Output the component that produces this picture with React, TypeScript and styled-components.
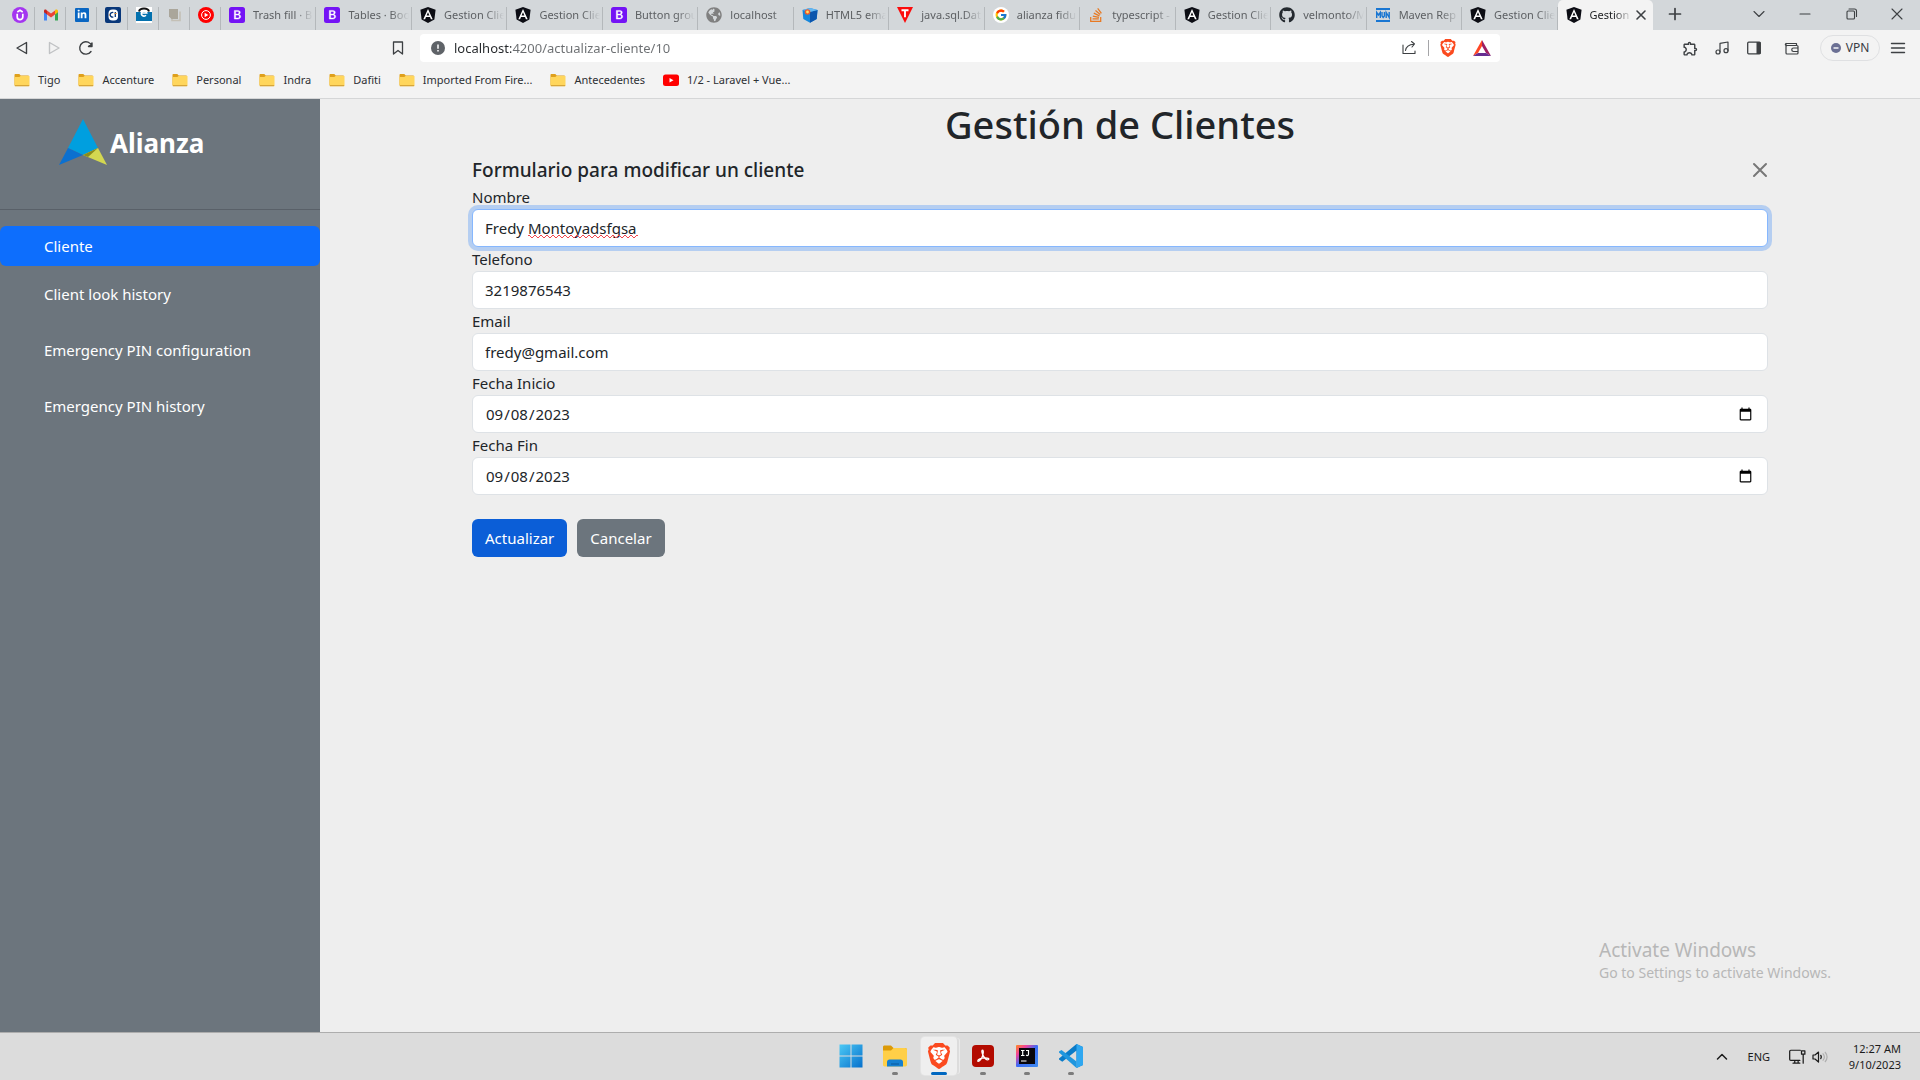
import React from 'react';
import styled, { createGlobalStyle, css } from 'styled-components';
import { FaAngular, FaGithub, FaGlobeAmericas, FaLinkedinIn, FaStackOverflow } from 'react-icons/fa';
import { FcGoogle } from 'react-icons/fc';
import { SiBrave } from 'react-icons/si';
import { MdOutlineExtension } from 'react-icons/md';
import { Music } from 'lucide-react';

const GlobalStyle = createGlobalStyle`
  *, *::before, *::after { box-sizing: border-box; }
  body {
    margin: 0;
    background: #eeeeee;
    color: #212529;
    font-family: "Noto Sans", "Open Sans", "Liberation Sans", sans-serif;
    font-size: 15px;
    line-height: 24px;
  }
  button, input { font: inherit; color: inherit; margin: 0; }
  button { border: 0; padding: 0; background: none; cursor: pointer; }
  a { color: inherit; text-decoration: none; }
  ul { list-style: none; margin: 0; padding: 0; }
  svg { display: block; flex: none; }
`;

const Desktop = styled.div`
  display: flex;
  flex-direction: column;
  min-height: 100vh;
`;

/* ---------- Tab strip ---------- */

const TabStrip = styled.div`
  display: flex;
  height: 30px;
  background: #d3d7da;
`;

const PinnedTabs = styled.div`
  display: flex;
  padding-left: 4px;
`;

const separator = css`
  background-image: linear-gradient(#b4b8bb, #b4b8bb);
  background-size: 1px 23px;
  background-position: right bottom;
  background-repeat: no-repeat;
`;

const PinnedTab = styled.button`
  ${separator}
  display: flex;
  align-items: center;
  justify-content: center;
  width: 31px;
`;

const OpenTabs = styled.div`
  display: flex;
  flex: 1;
  min-width: 0;
`;

const Tab = styled.div<{ $active?: boolean }>`
  display: flex;
  flex: 1 1 0;
  min-width: 0;
  align-items: center;
  padding: 0 3px 0 8px;
  font-size: 11px;
  line-height: 16px;
  color: #5d6063;
  ${(p) => (p.$active
    ? css`
        background: #f3f3f3;
        color: #222426;
        border-radius: 5px 5px 0 0;
      `
    : separator)}
`;

const TabTitle = styled.button`
  flex: 1;
  min-width: 0;
  padding-left: 8px;
  overflow: hidden;
  white-space: nowrap;
  text-align: left;
  mask-image: linear-gradient(90deg, #000 calc(100% - 18px), transparent);
`;

const IconButton = styled.button<{ $w?: number }>`
  display: flex;
  align-items: center;
  justify-content: center;
  width: ${(p) => p.$w ?? 32}px;
  height: 28px;
  color: #3d4043;
`;

const WindowControls = styled.div`
  display: flex;
  width: 267px;
`;

const Spacer = styled.div`
  flex: 1;
`;

/* ---------- Toolbar ---------- */

const Toolbar = styled.div`
  display: grid;
  grid-template-columns: minmax(120px, 1fr) minmax(0, 1080px) minmax(240px, 1fr);
  align-items: center;
  height: 36px;
  background: #f3f3f3;
`;

const ToolGroup = styled.div`
  display: flex;
  align-items: center;
  padding: 0 6px;
`;

const AddressBar = styled.div`
  display: flex;
  align-items: center;
  height: 28px;
  padding-left: 10px;
  border-radius: 4px;
  background: #fff;
`;

const UrlInput = styled.input`
  flex: 1;
  min-width: 0;
  padding: 0 8px;
  border: 0;
  outline: 0;
  font-size: 13px;
  line-height: 20px;
  background: linear-gradient(90deg, #25282b 65px, #6b6e71 65px);
  -webkit-background-clip: text;
  -webkit-text-fill-color: transparent;
`;

const Divider = styled.span`
  width: 1px;
  height: 16px;
  margin: 0 3px;
  background: #a5a5a8;
`;

const VpnButton = styled.button`
  display: flex;
  align-items: center;
  justify-content: center;
  gap: 5px;
  width: 60px;
  height: 26px;
  margin: 0 2px 0 6px;
  border: 1px solid #dfe0e2;
  border-radius: 13px;
  font-size: 12px;
  line-height: 16px;
  color: #3a3c44;
`;

/* ---------- Bookmarks ---------- */

const BookmarkBar = styled.nav`
  display: flex;
  align-items: center;
  gap: 18px;
  height: 33px;
  padding: 0 14px 4px;
  background: #f3f3f3;
  border-bottom: 1px solid #d5d6d7;
`;

const Bookmark = styled.a`
  display: flex;
  align-items: center;
  gap: 8px;
  font-size: 11px;
  line-height: 16px;
  color: #2e3033;
  white-space: nowrap;
`;

/* ---------- Application ---------- */

const AppShell = styled.div`
  position: relative;
  display: flex;
  flex: 1;
`;

const Sidebar = styled.aside`
  flex: none;
  width: 320px;
  background: #6c757d;
  color: #fff;
`;

const Brand = styled.a`
  display: flex;
  height: 111px;
  padding: 20px 0 0 58px;
  border-bottom: 1px solid #596068;
`;

const Menu = styled.ul`
  display: flex;
  flex-direction: column;
  gap: 16px;
  padding-top: 16px;
`;

const MenuGroup = styled.li`
  display: flex;
  flex-direction: column;
  gap: 8px;
`;

const MenuLink = styled.a<{ $active?: boolean }>`
  display: block;
  padding: 8px 44px;
  border-radius: 6px;
  background: ${(p) => (p.$active ? '#0d6efd' : 'transparent')};
`;

const Main = styled.main`
  flex: 1;
  min-width: 0;
`;

const Container = styled.div`
  max-width: 1320px;
  margin: 0 auto;
  padding: 0 12px;
`;

const PageTitle = styled.h1`
  margin: 0 0 6px;
  font-size: 38px;
  font-weight: 500;
  line-height: 50px;
  text-align: center;
`;

const FormHeader = styled.div`
  display: flex;
  align-items: center;
  justify-content: space-between;
  height: 30px;
`;

const FormTitle = styled.h5`
  margin: 0;
  font-size: 19px;
  font-weight: 500;
  line-height: 26px;
`;

const CloseButton = styled.button`
  color: #777;
`;

const Field = styled.div`
  display: flex;
  flex-direction: column;
`;

const InputWrap = styled.div`
  position: relative;
  display: flex;
`;

const Input = styled.input<{ $focused?: boolean }>`
  flex: 1;
  min-width: 0;
  height: 38px;
  padding: 6px 12px;
  border: 1px solid #dee2e6;
  border-radius: 6px;
  outline: 0;
  background: #fff;
  ${(p) => p.$focused && css`
    border-color: #86b7fe;
    box-shadow: 0 0 0 4px rgba(13, 110, 253, 0.25);
  `}
`;

const SpellingMark = styled.span`
  position: absolute;
  left: 56px;
  bottom: 9px;
  width: 110px;
  height: 3px;
  background:
    repeating-linear-gradient(90deg, #f0474d 0 2px, transparent 2px 6px) 0 0 / 100% 1px no-repeat,
    repeating-linear-gradient(90deg, transparent 0 2px, #f0474d 2px 3px, transparent 3px 5px, #f0474d 5px 6px) 0 1px / 100% 1px no-repeat,
    repeating-linear-gradient(90deg, transparent 0 3px, #f0474d 3px 5px, transparent 5px 6px) 0 2px / 100% 1px no-repeat;
`;

const Actions = styled.div`
  display: flex;
  gap: 10px;
  padding-top: 24px;
`;

const Button = styled.button<{ $primary?: boolean }>`
  height: 38px;
  padding: 0 13px;
  border-radius: 6px;
  color: #fff;
  background: ${(p) => (p.$primary ? '#0b5ed7' : '#6c757d')};
`;

const Watermark = styled.div`
  position: absolute;
  right: 84px;
  bottom: 49px;
  width: 237px;
  color: #b7b7b7;
  font-size: 14px;
  line-height: 20px;
`;

const WatermarkTitle = styled.div`
  font-size: 19px;
  line-height: 26px;
`;

/* ---------- Taskbar ---------- */

const Taskbar = styled.footer`
  display: grid;
  grid-template-columns: 1fr auto 1fr;
  height: 48px;
  background: #dcdcdc;
  border-top: 1px solid #adadad;
`;

const TaskApps = styled.div`
  grid-column: 2;
  display: flex;
  padding-left: 2px;
`;

const TaskApp = styled.button<{ $state?: 'running' | 'active' }>`
  position: relative;
  display: flex;
  align-items: center;
  justify-content: center;
  width: 36px;
  height: 38px;
  margin: 4px;
  border-radius: 4px;
  ${(p) => p.$state === 'active' && css`
    background: #efefef;
    box-shadow: 3px 0 0 -1px #dcdcdc, 4px 0 0 -1px #ebebeb, 0 0 0 1px #e4e4e4;
  `}
  ${(p) => p.$state && css`
    &::after {
      content: '';
      position: absolute;
      bottom: 0;
      width: ${p.$state === 'active' ? 16 : 6}px;
      height: 3px;
      border-radius: 2px;
      background: ${p.$state === 'active' ? '#0067c0' : '#7c7c7c'};
    }
  `}
`;

const Tray = styled.div`
  display: flex;
  align-items: center;
  justify-content: flex-end;
  padding-right: 19px;
  font-size: 11px;
  line-height: 16px;
  color: #1b1b1b;
`;

const Language = styled.button`
  margin: 0 18px;
`;

const TrayStatus = styled.button`
  display: flex;
  align-items: center;
  gap: 6px;
  margin-right: 13px;
`;

const Clock = styled.button`
  width: 60px;
  text-align: right;
`;

/* ---------- Icons ---------- */

const BootstrapIcon = () => (
  <svg width="16" height="16" viewBox="0 0 16 16">
    <rect width="16" height="16" rx="2.5" fill="#7413f5" />
    <path d="M5.3 3.4h3.5c1.5 0 2.5.8 2.5 2.1 0 .9-.7 1.7-1.5 1.9v.1c1.1.1 1.9.9 1.9 2.1 0 1.6-1.200 2.500-3 2.500H5.300z M6.700 4.500v2.600h1.500c1.100 0 1.700-.5 1.700-1.300s-.5-1.300-1.500-1.300zM6.700 8.100v2.900h1.800c1.200 0 1.800-.5 1.800-1.500s-.7-1.400-1.900-1.400z" fill="#fff" fillRule="evenodd" stroke="#fff" strokeWidth=".4" />
  </svg>
);

const AngularIcon = () => (
  <svg width="16" height="16" viewBox="0 0 16 16">
    <path d="M8 0l7.600 2.700-1.200 9.900L8 16l-6.400-3.400L.4 2.700z" fill="#0c0d14" />
    <path d="M8 1.900L3.300 12.300h1.800l.9-2.300h4l.9 2.300h1.800zM8 5.200l1.400 3.300H6.600z" fill="#fff" />
  </svg>
);

const UdemyIcon = () => (
  <svg width="16" height="16" viewBox="0 0 16 16">
    <circle cx="8" cy="8" r="8" fill="#a435f0" />
    <path d="M5.200 6.800v3.100c0 3.500 5.600 3.500 5.600 0V6.800M5.300 5L8 3.300 10.700 5" fill="none" stroke="#fff" strokeWidth="1.700" />
  </svg>
);

const GmailIcon = () => (
  <svg width="16" height="16" viewBox="0 0 16 16">
    <path d="M1 4v9.500h3V6.800L1 4z" fill="#4285f4" />
    <path d="M12 6.800v6.700h3V4z" fill="#34a853" />
    <path d="M12 3.600v4L15 5.300V4c0-1.600-1.700-2-2.700-1.200z" fill="#fbbc04" />
    <path d="M4 7.600V3.500l4 3 4-3v4.100l-4 3z" fill="#ea4335" />
    <path d="M1 4v1.300l3 2.300V3.500l-.5-.5C2.500 2.200 1 2.700 1 4z" fill="#c5221f" />
  </svg>
);

const LinkedinIcon = () => (
  <svg width="16" height="16" viewBox="0 0 16 16">
    <rect x="1" y="1" width="14" height="14" rx="1" fill="#0a66c2" />
    <g transform="translate(3 2.500)"><FaLinkedinIn size={10} color="#fff" /></g>
  </svg>
);

const CredentialIcon = () => (
  <svg width="16" height="16" viewBox="0 0 16 16">
    <rect width="16" height="16" rx="2" fill="#08377a" />
    <rect x="3.500" y="2.500" width="9.500" height="11" rx="4" fill="#fff" />
    <path d="M8.300 5.600a2.300 2.300 0 1 0 0 4.300" fill="none" stroke="#08377a" strokeWidth="1.300" />
    <path d="M10.300 5v5" stroke="#08377a" strokeWidth="1.300" />
    <path d="M4 8h1M9.600 6.500h2" stroke="#e58a28" strokeWidth="1" />
  </svg>
);

const BadgeIcon = () => (
  <svg width="16" height="16" viewBox="0 0 16 16">
    <rect width="16" height="16" fill="#fff" />
    <path d="M0 5h16v9H0z" fill="#0471ae" />
    <path d="M3 4.500C4 .5 12 .5 13 4.500" fill="none" stroke="#141414" strokeWidth="2" />
    <path d="M5.500 6h5.200A2.700 2.700 0 1 0 10 8.300" fill="none" stroke="#fff" strokeWidth="1.600" />
  </svg>
);

const PagesIcon = () => (
  <svg width="16" height="16" viewBox="0 0 16 16">
    <path d="M5 5v8.500h8V4.500" fill="none" stroke="#c4c0b6" strokeWidth="1.600" />
    <path d="M2 2h9v10H4.500L2 9.500z" fill="#aaa69b" />
  </svg>
);

const YoutubeMusicIcon = () => (
  <svg width="16" height="16" viewBox="0 0 16 16">
    <circle cx="8" cy="8" r="8" fill="#f00" />
    <circle cx="8" cy="8" r="4.400" fill="none" stroke="#fff" strokeWidth="1" />
    <path d="M6.600 5.700v4.600L10.300 8z" fill="#fff" />
  </svg>
);

const CubeIcon = () => (
  <svg width="16" height="16" viewBox="0 0 16 16">
    <path d="M.5 3L8 1l7.500 2-.8 9L8 15.800 1.300 12z" fill="#1687dc" />
    <path d="M8 5l7.500-2-.8 9L8 15.800z" fill="#0b55ad" />
    <path d="M.5 3L8 1l7.500 2L8 5z" fill="#64b7f2" />
    <circle cx="5.500" cy="5" r="2.800" fill="#f15a29" />
    <circle cx="5.500" cy="5" r="1.400" fill="#ffe066" />
  </svg>
);

const TriangleIcon = () => (
  <svg width="16" height="16" viewBox="0 0 16 16">
    <path d="M0 0h16L8 16z" fill="#fb0d0d" />
    <path d="M4.500 3.200h7M8 3.200v7" stroke="#fff" strokeWidth="1.900" />
  </svg>
);

const GoogleIcon = () => (
  <svg width="16" height="16" viewBox="0 0 16 16">
    <circle cx="8" cy="8" r="8" fill="#fff" />
    <g transform="translate(1.500 1.500)"><FcGoogle size={13} /></g>
  </svg>
);

const MavenIcon = () => (
  <svg width="16" height="16" viewBox="0 0 16 16" stroke="#1976d2" fill="none">
    <path d="M1 2h14M1 14h14" strokeWidth="2" />
    <path d="M1.700 11V5.500L3.500 8l1.800-2.500V11M7 5v4l1.200 1.500L9.400 9V5M11.200 11V5.500l3 5V5" strokeWidth="1.400" />
  </svg>
);

const FolderIcon = () => (
  <svg width="16" height="16" viewBox="0 0 16 16">
    <path d="M.5 3c0-.6.400-1 1-1h3.800l1.400 1.500H14c.6 0 1 .4 1 1V13H.5z" fill="#dfa01c" />
    <path d="M.5 5h4.800l1.200-1H15.500v9.300c0 .5-.4.900-.9.900H1.400c-.5 0-.9-.4-.9-.9z" fill="#ffd65c" />
    <path d="M.8 13.700h14.400" stroke="#c9952c" strokeWidth=".9" />
  </svg>
);

const YoutubeIcon = () => (
  <svg width="16" height="16" viewBox="0 0 16 16">
    <rect y="2.500" width="16" height="11.500" rx="2.500" fill="#f00" />
    <path d="M6.500 6v4.500l4-2.250z" fill="#fff" />
  </svg>
);

const BraveIcon = ({ size }: { size: number }) => (
  <svg width={size} height={size} viewBox="0 0 24 24">
    <path d="M6 3h12l2 5-2 8-6 6-6-6-2-8z" fill="#fff" />
    <SiBrave size={24} color="#fb4a1f" />
  </svg>
);

const BatIcon = () => (
  <svg width="18" height="16" viewBox="0 0 18 16">
    <path d="M9 0L0 16l5-3 4-7z" fill="#ff4724" />
    <path d="M9 0l9 16-5-3-4-7z" fill="#9e1f63" />
    <path d="M0 16h18l-5-3H5z" fill="#662d91" />
  </svg>
);

const Line = ({ d, size = 16, w = 1.2, fill = 'none' }: { d: string; size?: number; w?: number; fill?: string }) => (
  <svg width={size} height={size} viewBox="0 0 16 16" fill={fill} stroke="currentColor" strokeWidth={w} strokeLinecap="round" strokeLinejoin="round">
    <path d={d} />
  </svg>
);

const AlianzaLogo = () => (
  <svg width="146" height="48" viewBox="0 0 146 48" role="img" aria-label="Alianza">
    <path d="M25 0l15 29-15 7-15-7z" fill="#009fdf" />
    <path d="M10 29l15 7L1 46z" fill="#0b70d0" />
    <path d="M40 29l9 17-24-10z" fill="#d3d751" />
    <path d="M40 29l-15 7 5 2z" fill="#8b8b1c" />
    <text x="52" y="34" fill="#fff" fontFamily='"Noto Sans", sans-serif' fontWeight="700" fontSize="26">Alianza</text>
  </svg>
);

const WindowsIcon = () => (
  <svg width="24" height="24" viewBox="0 0 24 24">
    <defs>
      <linearGradient id="win" x1="0" y1="0" x2="1" y2="1" gradientUnits="objectBoundingBox">
        <stop offset="0" stopColor="#4cc9f5" />
        <stop offset="1" stopColor="#0670cc" />
      </linearGradient>
    </defs>
    <path d="M.5.5h11v11H.5zM12.500.5h11v11h-11zM.5 12.500h11v11H.5zM12.500 12.500h11v11h-11z" fill="url(#win)" />
  </svg>
);

const ExplorerIcon = () => (
  <svg width="24" height="24" viewBox="0 0 24 24">
    <path d="M0 3c0-1 .7-1.500 1.500-1.500H8L10.500 4H22c1 0 2 .7 2 1.800V9H0z" fill="#dc9a08" />
    <path d="M0 6.500h8L10.500 4H22c1 0 2 .7 2 1.800v15c0 1-.7 1.700-1.700 1.700H1.700C.7 22.500 0 21.800 0 20.800z" fill="#ffcf48" />
    <path d="M4 22.500V18c0-1.500 1-2.500 2.500-2.500h11c1.500 0 2.500 1 2.500 2.500v4.500z" fill="#1580d1" />
    <path d="M8 19.500h8v1H8z" fill="#0a589b" />
  </svg>
);

const AcrobatIcon = () => (
  <svg width="22" height="22" viewBox="0 0 22 22">
    <rect width="22" height="22" rx="4" fill="#b30b00" />
    <path d="M10.500 5.200c-1.300 0-.4 3.600.8 5.600 1.200 2.100 3.600 4.300 4.900 3.900 1.700-.7-.3-2.200-4-1.800-3 .2-6.300 1.600-6.400 2.800-.1 1.600 2.400.3 4-3 1.600-3.100 2-7.500.7-7.500z" fill="none" stroke="#fff" strokeWidth="1.300" />
  </svg>
);

const IntellijIcon = () => (
  <svg width="22" height="22" viewBox="0 0 22 22">
    <defs>
      <linearGradient id="ij" x1="0" y1="0" x2="1" y2="1">
        <stop offset="0" stopColor="#ff8a1f" />
        <stop offset=".25" stopColor="#f0419c" />
        <stop offset=".5" stopColor="#3b6cf6" />
        <stop offset="1" stopColor="#3f8cf0" />
      </linearGradient>
    </defs>
    <rect width="22" height="22" rx="1" fill="url(#ij)" />
    <rect x="3" y="3" width="16" height="16" fill="#08060c" />
    <path d="M5 5.500h3.500M5 10.500h3.500M6.700 5.500v5M10 5.500h2.500v3.700c0 1.500-1.500 1.700-2.300.8M5 16h5.500" fill="none" stroke="#fff" strokeWidth="1.200" />
  </svg>
);

const VscodeIcon = () => (
  <svg width="24" height="24" viewBox="0 0 24 24">
    <path d="M17.500 0L24 3v18l-6.500 3V6.500L3.300 17.700 0 15.500v-1z" fill="#0a7bc8" />
    <path d="M17.500 24L0 8.500v-1L2.500 6l15 11.500z" fill="#1f96de" />
    <path d="M17.500 0L24 3v18l-6.500 3z" fill="#2fa7f0" />
  </svg>
);

/* ---------- Data ---------- */

const pinned = [
  { name: 'Udemy', icon: <UdemyIcon /> },
  { name: 'Gmail', icon: <GmailIcon /> },
  { name: 'LinkedIn', icon: <LinkedinIcon /> },
  { name: 'Credenciales', icon: <CredentialIcon /> },
  { name: 'Portal', icon: <BadgeIcon /> },
  { name: 'Documentos', icon: <PagesIcon /> },
  { name: 'YouTube Music', icon: <YoutubeMusicIcon /> },
];

const tabs = [
  { title: 'Trash fill · B', icon: <BootstrapIcon /> },
  { title: 'Tables · Boo', icon: <BootstrapIcon /> },
  { title: 'Gestion Clie', icon: <AngularIcon /> },
  { title: 'Gestion Clie', icon: <AngularIcon /> },
  { title: 'Button grou', icon: <BootstrapIcon /> },
  { title: 'localhost', icon: <FaGlobeAmericas size={16} color="#808080" /> },
  { title: 'HTML5 ema', icon: <CubeIcon /> },
  { title: 'java.sql.Dat', icon: <TriangleIcon /> },
  { title: 'alianza fidu', icon: <GoogleIcon /> },
  { title: 'typescript -', icon: <FaStackOverflow size={16} color="#e87922" /> },
  { title: 'Gestion Clie', icon: <AngularIcon /> },
  { title: 'velmonto/M', icon: <FaGithub size={16} color="#24292f" /> },
  { title: 'Maven Rep', icon: <MavenIcon /> },
  { title: 'Gestion Clie', icon: <AngularIcon /> },
];

const folders = ['Tigo', 'Accenture', 'Personal', 'Indra', 'Dafiti', 'Imported From Fire...', 'Antecedentes'];

const fields = [
  { id: 'nombre', label: 'Nombre', type: 'text', value: 'Fredy Montoyadsfgsa', focused: true },
  { id: 'telefono', label: 'Telefono', type: 'text', value: '3219876543' },
  { id: 'email', label: 'Email', type: 'text', value: 'fredy@gmail.com' },
  { id: 'fechaInicio', label: 'Fecha Inicio', type: 'date', value: '2023-09-08' },
  { id: 'fechaFin', label: 'Fecha Fin', type: 'date', value: '2023-09-08' },
];

/* ---------- Sections ---------- */

const BrowserChrome = () => (
  <header>
    <TabStrip>
      <PinnedTabs>
        {pinned.map((p) => (
          <PinnedTab key={p.name} aria-label={p.name}>{p.icon}</PinnedTab>
        ))}
      </PinnedTabs>
      <OpenTabs>
        {tabs.map((t, i) => (
          <Tab key={i}>
            {t.icon}
            <TabTitle>{t.title}</TabTitle>
          </Tab>
        ))}
        <Tab $active>
          <AngularIcon />
          <TabTitle>Gestion</TabTitle>
          <IconButton $w={18} aria-label="Cerrar pestaña"><Line d="M4 4l8 8M12 4l-8 8" w={1.6} /></IconButton>
        </Tab>
      </OpenTabs>
      <WindowControls>
        <IconButton $w={44} aria-label="Nueva pestaña"><Line d="M8 2.500v11M2.500 8h11" w={1.700} /></IconButton>
        <Spacer />
        <IconButton $w={46} aria-label="Buscar pestañas"><Line d="M3 5.500l5 5 5-5" w={1.1} /></IconButton>
        <IconButton $w={46} aria-label="Minimizar"><Line d="M3 8h10" w={1.1} /></IconButton>
        <IconButton $w={46} aria-label="Restaurar"><Line d="M5 5h5.500a1 1 0 0 1 1 1v6a1 1 0 0 1-1 1H5a1 1 0 0 1-1-1V6a1 1 0 0 1 1-1zM6 3h5.500a2 2 0 0 1 2 2v5.500" w={1.1} /></IconButton>
        <IconButton $w={46} aria-label="Cerrar"><Line d="M3 3l10 10M13 3L3 13" w={1.1} /></IconButton>
      </WindowControls>
    </TabStrip>
    <Toolbar>
      <ToolGroup>
        <IconButton aria-label="Atrás"><Line d="M12.500 2.500v11L3 8z" w={1.4} /></IconButton>
        <IconButton aria-label="Adelante" disabled><svg width="16" height="16" viewBox="0 0 16 16" fill="none" stroke="#c0c2c4" strokeWidth="1.400" strokeLinejoin="round"><path d="M3.500 2.500v11L13 8z" /></svg></IconButton>
        <IconButton aria-label="Recargar"><Line d="M13 11.500A6.200 6.200 0 1 1 13.800 6M14 3v3.500h-3.500z" w={1.4} /></IconButton>
        <Spacer />
        <IconButton aria-label="Agregar a marcadores"><Line d="M3.500 2h9v12L8 10.500 3.500 14z" w={1.3} /></IconButton>
      </ToolGroup>
      <AddressBar>
        <svg width="16" height="16" viewBox="0 0 16 16"><circle cx="8" cy="8" r="7" fill="#5f6368" /><path d="M8 4.500v4.300M8 10v1.500" stroke="#fff" strokeWidth="1.500" /></svg>
        <UrlInput aria-label="Dirección" defaultValue="localhost:4200/actualizar-cliente/10" />
        <IconButton aria-label="Compartir"><Line d="M2 5v8.500h12V11M4.500 10.500c.5-4 3-6 8.500-6.300M10.500 1.500L13.500 4 11 7" w={1.1} /></IconButton>
        <Divider />
        <IconButton aria-label="Brave Shields"><BraveIcon size={18} /></IconButton>
        <IconButton $w={36} aria-label="Brave Rewards"><BatIcon /></IconButton>
      </AddressBar>
      <ToolGroup>
        <Spacer />
        <IconButton aria-label="Extensiones"><MdOutlineExtension size={17} /></IconButton>
        <IconButton aria-label="Música"><Music size={16} strokeWidth={1.8} /></IconButton>
        <IconButton aria-label="Barra lateral">
          <svg width="16" height="16" viewBox="0 0 16 16"><rect x="1.700" y="2.200" width="12.600" height="11.600" rx="1" fill="none" stroke="currentColor" strokeWidth="1.300" /><path d="M10.500 2h4v12h-4z" fill="currentColor" /></svg>
        </IconButton>
        <IconButton $w={44} aria-label="Billetera"><Line d="M2 3.500h10.500v2M2 3.500v9.500a1 1 0 0 0 1 1h10a1 1 0 0 0 1-1V6.500a1 1 0 0 0-1-1H3a1 1 0 0 1-1-2zM14 8h-4.500a1.700 1.700 0 0 0 0 3.500H14" w={1.2} /></IconButton>
        <VpnButton>
          <svg width="10" height="10" viewBox="0 0 10 10"><circle cx="5" cy="5" r="5" fill="#6b7094" /><path d="M2.500 5h5" stroke="#fff" strokeWidth="1.400" /></svg>
          VPN
        </VpnButton>
        <IconButton aria-label="Menú"><Line d="M1.500 3.500h13M1.500 8h13M1.500 12.500h13" w={1.4} /></IconButton>
      </ToolGroup>
    </Toolbar>
    <BookmarkBar aria-label="Marcadores">
      {folders.map((f) => (
        <Bookmark key={f} href="#"><FolderIcon />{f}</Bookmark>
      ))}
      <Bookmark href="#"><YoutubeIcon />1/2 - Laravel + Vue...</Bookmark>
    </BookmarkBar>
  </header>
);

const ClientForm = () => (
  <form onSubmit={(e) => e.preventDefault()}>
    <FormHeader>
      <FormTitle>Formulario para modificar un cliente</FormTitle>
      <CloseButton type="button" aria-label="Cerrar"><Line d="M2 2l12 12M14 2L2 14" w={2} /></CloseButton>
    </FormHeader>
    {fields.map((f) => (
      <Field key={f.id}>
        <label htmlFor={f.id}>{f.label}</label>
        <InputWrap>
          <Input id={f.id} type={f.type} defaultValue={f.value} $focused={f.focused} />
          {f.focused && <SpellingMark />}
        </InputWrap>
      </Field>
    ))}
    <Actions>
      <Button $primary type="submit">Actualizar</Button>
      <Button type="button">Cancelar</Button>
    </Actions>
  </form>
);

export default function App() {
  return (
    <>
      <GlobalStyle />
      <Desktop>
        <BrowserChrome />
        <AppShell>
          <Sidebar>
            <Brand href="#"><AlianzaLogo /></Brand>
            <nav>
              <Menu>
                <MenuGroup>
                  <MenuLink href="#" $active>Cliente</MenuLink>
                  <MenuLink href="#">Client look history</MenuLink>
                </MenuGroup>
                <MenuGroup><MenuLink href="#">Emergency PIN configuration</MenuLink></MenuGroup>
                <MenuGroup><MenuLink href="#">Emergency PIN history</MenuLink></MenuGroup>
              </Menu>
            </nav>
          </Sidebar>
          <Main>
            <Container>
              <PageTitle>Gestión de Clientes</PageTitle>
              <ClientForm />
            </Container>
          </Main>
          <Watermark>
            <WatermarkTitle>Activate Windows</WatermarkTitle>
            Go to Settings to activate Windows.
          </Watermark>
        </AppShell>
        <Taskbar>
          <TaskApps>
            <TaskApp aria-label="Inicio"><WindowsIcon /></TaskApp>
            <TaskApp aria-label="Explorador" $state="running"><ExplorerIcon /></TaskApp>
            <TaskApp aria-label="Brave" $state="active"><BraveIcon size={26} /></TaskApp>
            <TaskApp aria-label="Acrobat" $state="running"><AcrobatIcon /></TaskApp>
            <TaskApp aria-label="IntelliJ IDEA" $state="running"><IntellijIcon /></TaskApp>
            <TaskApp aria-label="Visual Studio Code" $state="running"><VscodeIcon /></TaskApp>
          </TaskApps>
          <Tray>
            <button aria-label="Iconos ocultos"><Line d="M3.500 10L8 5.500l4.500 4.500" w={1.500} /></button>
            <Language>ENG</Language>
            <TrayStatus aria-label="Red y volumen">
              <Line size={18} d="M11 2H2.500a1 1 0 0 0-1 1v7a1 1 0 0 0 1 1h8M4.500 13.500h6M6 11v2.500M9 11v2.500M12 2.500h3v3h-3zM13.500 5.500v8" w={1.1} />
              <svg width="16" height="16" viewBox="0 0 16 16" fill="none" stroke="#1b1b1b" strokeWidth="1.200" strokeLinejoin="round">
                <path d="M1 6v4h2l3.500 3V3L3 6zM8.500 6c1 1.200 1 2.800 0 4" />
                <path d="M10.700 4.300c2 2.200 2 5.200 0 7.400M13 3c2.500 3 2.500 7 0 10" stroke="#b0b0b0" />
              </svg>
            </TrayStatus>
            <Clock>12:27 AM<br />9/10/2023</Clock>
          </Tray>
        </Taskbar>
      </Desktop>
    </>
  );
}
